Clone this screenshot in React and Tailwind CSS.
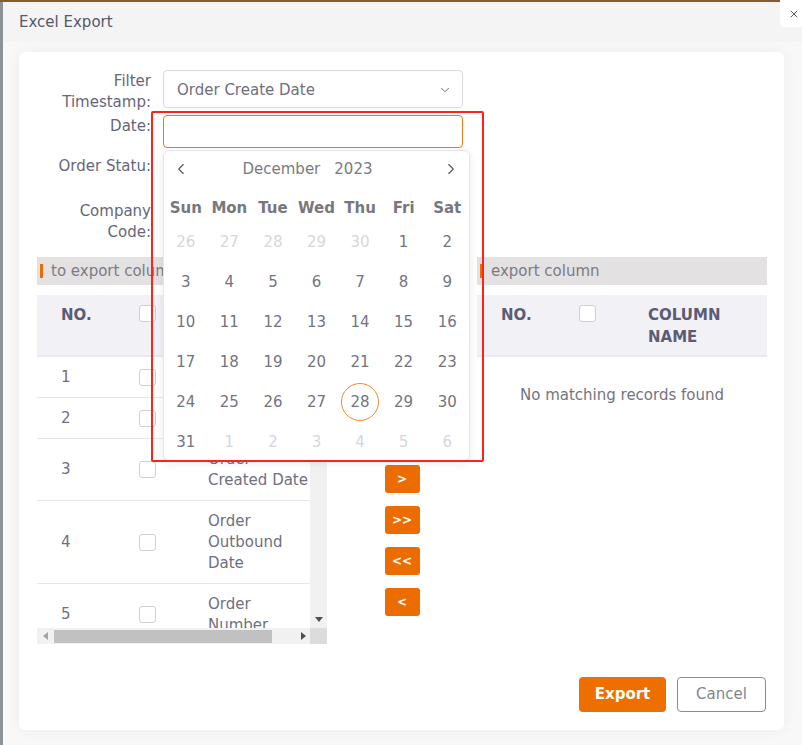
import React from 'react';
import { ChevronDown, ChevronLeft, ChevronRight, X } from 'lucide-react';

const leftRows = [
  { no: 1, lines: ['Platform'] },
  { no: 2, lines: ['Store'] },
  { no: 3, lines: ['Order', 'Created Date'] },
  { no: 4, lines: ['Order', 'Outbound', 'Date'] },
  { no: 5, lines: ['Order', 'Number'] },
];

const weekdays = ['Sun', 'Mon', 'Tue', 'Wed', 'Thu', 'Fri', 'Sat'];

const days = [
  ...[26, 27, 28, 29, 30].map(d => ({ d, muted: true })),
  ...Array.from({ length: 31 }, (_, i) => ({ d: i + 1, muted: false })),
  ...[1, 2, 3, 4, 5, 6].map(d => ({ d, muted: true })),
];

const Checkbox = () => (
  <span className="block w-[17px] h-[17px] rounded-[3px] border border-[#cfcfd6] bg-white" />
);

const SectionBar = ({ title }) => (
  <div className="h-[28px] bg-[#e3e1e1] flex items-center">
    <span className="ml-[3px] w-[3px] h-[14px] bg-[#ec6c00]" />
    <span className="ml-[8px] text-[15px] text-[#7b7b86] whitespace-nowrap">{title}</span>
  </div>
);

const TableHeader = () => (
  <div className="h-[62px] flex items-start bg-[#f1f1f6] border-b-2 border-[#e9e9f0] text-[#5c5c74] font-bold text-[15px] leading-[22px]">
    <div className="w-[101px] shrink-0 pl-[24px] pt-[9px]">NO.</div>
    <div className="w-[70px] shrink-0 pl-px pt-[10px]"><Checkbox /></div>
    <div className="w-[110px] shrink-0 pt-[9px]">
      <div>COLUMN</div>
      <div>NAME</div>
    </div>
  </div>
);

const Calendar = () => (
  <div className="absolute left-[144px] top-[98px] w-[307px] h-[311px] bg-white border border-[#e6e6ea] rounded-md shadow-[0_2px_10px_rgba(0,0,0,0.08)]">
    <div className="h-[36px] flex items-center text-[#555]">
      <div className="w-[34px] flex justify-center"><ChevronLeft size={18} strokeWidth={1.5} /></div>
      <div className="flex-1 flex justify-center gap-[14px] pr-[16px] text-[15px] text-[#7a7a80]">
        <span>December</span>
        <span>2023</span>
      </div>
      <div className="w-[36px] flex justify-center"><ChevronRight size={18} strokeWidth={1.5} /></div>
    </div>
    <div className="mt-[7px] h-[28px] grid grid-cols-7 items-center text-center text-[15px] font-bold text-[#78787c]">
      {weekdays.map(w => <span key={w}>{w}</span>)}
    </div>
    <div className="grid grid-cols-7 text-[15px]">
      {days.map((x, i) => (
        <div key={i} className="h-[40px] flex items-center justify-center">
          <span
            className={
              'w-[38px] h-[38px] rounded-full flex items-center justify-center ' +
              (x.muted ? 'text-[#d4d7de] ' : 'text-[#74747f] ') +
              (!x.muted && x.d === 28 ? 'border border-[#ef8a2e]' : '')
            }
          >
            {x.d}
          </span>
        </div>
      ))}
    </div>
  </div>
);

export default function App() {
  return (
    <div className="w-[802px] h-[745px] overflow-hidden bg-[#8f9398] flex flex-col relative font-['DejaVu_Sans',sans-serif]">
      <div className="h-[2px] bg-[#8a5a2e] shrink-0" />
      <div className="ml-[3px] flex-1 bg-[#f8f8f8] flex flex-col">
        <div className="h-[40px] px-[16px] flex items-center bg-[#f4f4f4] text-[15px] text-[#54586b]">
          Excel Export
        </div>
        <div className="px-[16px] pt-[10px]">
          <div className="relative w-[765px] h-[678px] bg-white rounded-md shadow-[0_0_14px_rgba(0,0,0,0.05)] pt-[18px] pl-[18px] pr-[17px] text-[#70707e]">
            {/* filter form */}
            <div className="flex flex-col text-[15px] leading-[21px]">
              <div className="flex items-start h-[42px]">
                <div className="w-[114px] pt-px text-right text-[#66667a]">Filter<br />Timestamp:</div>
                <div className="ml-[12px] w-[300px] h-[38px] border border-[#d9d9df] rounded-[4px] flex items-center justify-between pl-[13px] pr-[10px] pt-[2px] text-[#6e6e7e]">
                  <span>Order Create Date</span>
                  <ChevronDown size={14} strokeWidth={1.5} className="text-[#555]" />
                </div>
              </div>
              <div className="flex items-start mt-[3px] h-[33px]">
                <div className="w-[114px] pt-px text-right text-[#66667a]">Date:</div>
                <div className="ml-[12px] w-[300px] h-[33px] border border-[#ef7a1a] rounded-[4px] bg-white" />
              </div>
              <div className="flex items-start mt-[7px] h-[38px]">
                <div className="w-[114px] pt-px text-right text-[#66667a] whitespace-nowrap">Order Statu:</div>
                <div className="ml-[12px] w-[300px] h-[38px]" />
              </div>
              <div className="flex items-start mt-[7px] h-[42px]">
                <div className="w-[114px] pt-px text-right text-[#66667a]">Company<br />Code:</div>
                <div className="ml-[12px] w-[300px] h-[38px]" />
              </div>
            </div>

            {/* column transfer */}
            <div className="mt-[15px] flex">
              <div className="w-[290px]">
                <SectionBar title="to export column" />
                <div className="mt-[10px] h-[349px] flex flex-col">
                  <div className="flex h-[333px]">
                    <div className="w-[273px] h-[333px] overflow-hidden text-[15px] leading-[21px]">
                      <TableHeader />
                      {leftRows.map(r => (
                        <div key={r.no} className="flex items-center border-b border-[#e6e6ee] w-[281px]">
                          <div className="w-[101px] shrink-0 pl-[24px]">{r.no}</div>
                          <div className="w-[70px] shrink-0 pl-px"><Checkbox /></div>
                          <div className="w-[110px] shrink-0 pt-[10px] pb-[9px] whitespace-nowrap">
                            {r.lines.map(l => <div key={l}>{l}</div>)}
                          </div>
                        </div>
                      ))}
                    </div>
                    <div className="w-[17px] bg-[#f1f1f1] flex flex-col justify-end items-center pb-[6px]">
                      <svg width="8" height="5" viewBox="0 0 8 5"><path d="M0 0h8L4 5z" fill="#505050" /></svg>
                    </div>
                  </div>
                  <div className="flex h-[16px]">
                    <div className="w-[273px] bg-[#f1f1f1] flex items-center">
                      <svg width="5" height="8" viewBox="0 0 5 8" className="ml-[6px]"><path d="M5 0v8L0 4z" fill="#a3a3a3" /></svg>
                      <div className="ml-[6px] w-[218px] h-[13px] bg-[#c1c1c1]" />
                      <svg width="5" height="8" viewBox="0 0 5 8" className="ml-[29px]"><path d="M0 0v8l5-4z" fill="#505050" /></svg>
                    </div>
                    <div className="w-[17px] bg-[#dcdcdc]" />
                  </div>
                </div>
              </div>

              <div className="w-[150px] flex flex-col items-center pt-[208px] gap-[13px]">
                {['>', '>>', '<<', '<'].map(b => (
                  <button key={b} className="w-[35px] h-[28px] rounded-[3px] bg-[#ec6c00] text-white font-bold text-[12px]">
                    {b}
                  </button>
                ))}
              </div>

              <div className="w-[290px]">
                <SectionBar title="export column" />
                <div className="mt-[10px]">
                  <TableHeader />
                  <div className="pt-[28px] pb-[26px] leading-[21px] text-center text-[15px] text-[#74747f]">
                    No matching records found
                  </div>
                </div>
              </div>
            </div>

            {/* footer */}
            <div className="mt-[33px] flex justify-end gap-[11px] pr-px">
              <button className="w-[87px] h-[35px] rounded-[4px] bg-[#ed6f00] text-white text-[15px] font-bold">Export</button>
              <button className="w-[89px] h-[35px] rounded-[4px] border border-[#8c8c8c] bg-white text-[#858590] text-[15px]">Cancel</button>
            </div>

            <Calendar />
            <div className="absolute left-[132px] top-[59px] w-[333px] h-[351px] border-2 border-[#ff2218] rounded-[2px] pointer-events-none" />
          </div>
        </div>
      </div>
      <div className="absolute right-0 top-0 w-[22px] h-[27px] bg-white rounded-bl-[4px] flex items-center justify-end pr-[2px] text-[#5a5a70]">
        <X size={12} strokeWidth={2} />
      </div>
    </div>
  );
}
